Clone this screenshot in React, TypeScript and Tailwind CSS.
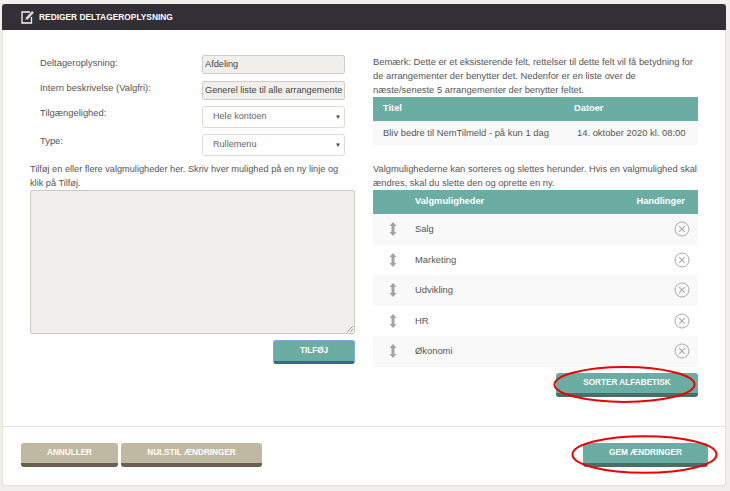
import React from "react";

const font = { fontFamily: '"Liberation Sans", Arial, sans-serif' };

function Btn({ children, w, kind }: { children: React.ReactNode; w: string; kind: "teal" | "tan" | "blue" }) {
  const cls =
    kind === "teal"
      ? "bg-[#6bada3] border-b-[4px] border-[#47706b]"
      : kind === "blue"
        ? "bg-[#6bada3] border border-[#7fa8dc] border-b-[3px] border-b-[#2f6d8c]"
        : "bg-[#bfb9a3] border-b-[4px] border-[#675f50]";
  return (
    <div className={`${w} ${cls} h-[24px] rounded-[3px] flex items-center justify-center pt-[1px] text-[8.2px] font-bold text-white`}>
      {children}
    </div>
  );
}

function Field({ label, value, top, labelPad }: { label: string; value: string; top: string; labelPad: string }) {
  return (
    <div className={`flex items-start ${top}`}>
      <div className={`w-[162px] ${labelPad} text-[9.4px] leading-[14px] text-[#555]`}>{label}</div>
      <div className="w-[143px] h-[19px] bg-[#f0efeb] border border-[#cfcdc6] rounded-[2px] px-[2px] flex items-center text-[9.2px] text-[#444] whitespace-nowrap">
        {value}
      </div>
    </div>
  );
}

function SelectRow({ label, value, top }: { label: string; value: string; top: string }) {
  return (
    <div className={`flex items-start ${top}`}>
      <div className="w-[162px] text-[9.4px] leading-[14px] text-[#555]">{label}</div>
      <div className="w-[143px] h-[22px] bg-white border border-[#dcdbd6] rounded-[3px] pl-[10px] pr-[3px] flex items-center justify-between text-[9.1px] text-[#666]">
        <span>{value}</span>
        <span className="text-[6px] text-[#444]">▼</span>
      </div>
    </div>
  );
}

function Grip() {
  return (
    <svg width="8" height="14" viewBox="0 0 8 14" fill="#a3a3a0">
      <path d="M4 0 L7.5 4 H5.5 V10 H7.5 L4 14 L0.5 10 H2.5 V4 H0.5 Z" />
    </svg>
  );
}

function Remove() {
  return (
    <svg width="16" height="16" viewBox="0 0 16 16" fill="none" stroke="#a9a9a6" strokeWidth="1">
      <circle cx="8" cy="8" r="7" />
      <path d="M5.2 5.2 L10.8 10.8 M10.8 5.2 L5.2 10.8" strokeWidth="1.1" />
    </svg>
  );
}

function Row({ name, shade }: { name: string; shade: boolean }) {
  return (
    <div className={`h-[30.5px] flex items-center text-[9.4px] text-[#555] ${shade ? "bg-[#f9f9f9]" : "bg-white"}`}>
      <div className="w-[42px] pr-[3px] flex justify-center">
        <Grip />
      </div>
      <div className="flex-1">{name}</div>
      <div className="pr-[8px] flex">
        <Remove />
      </div>
    </div>
  );
}

function EditIcon() {
  return (
    <svg width="14" height="14" viewBox="0 0 14 14" fill="none">
      <path d="M9 2 H1 V13 H10.5 V7" stroke="#f4f4f4" strokeWidth="1.3" />
      <path d="M4.5 9.8 L5 7.5 L11 1 L13 2.6 L7 9.2 Z" fill="#d8d8d8" />
    </svg>
  );
}

function Ellipse({ className }: { className: string }) {
  return (
    <svg className={`absolute pointer-events-none ${className}`} viewBox="0 0 100 100" preserveAspectRatio="none" fill="none">
      <ellipse cx="50" cy="50" rx="49" ry="47" stroke="#ee0000" strokeWidth="2" vectorEffect="non-scaling-stroke" />
    </svg>
  );
}

export default function App() {
  const rows = ["Salg", "Marketing", "Udvikling", "HR", "Økonomi"];
  return (
    <div style={font} className="relative w-[730px] h-[491px] bg-[#f0efeb] pt-[4px] pl-[2px] overflow-hidden">
      <div className="w-[724px] h-[482px] bg-white border-l border-r border-b border-[#e2e1da] rounded-b-[3px] flex flex-col">
        <div className="h-[26px] bg-[#323036] rounded-t-[3px] flex items-center pl-[19px] gap-[4px] -mx-[1px]">
          <EditIcon />
          <span className="text-[8.4px] font-bold text-white">REDIGER DELTAGEROPLYSNING</span>
        </div>

        <div className="h-[397px] flex border-b border-[#e2e1da]">
          <div className="w-[370px] pl-[27px] pt-[25px]">
            <div className="pl-[10px]">
              <Field label="Deltageroplysning:" value="Afdeling" top="" labelPad="pt-[1px]" />
              <Field label="Intern beskrivelse (Valgfri):" value="Generel liste til alle arrangemente" top="mt-[7px]" labelPad="pt-0" />
              <SelectRow label="Tilgængelighed:" value="Hele kontoen" top="mt-[6px]" />
              <SelectRow label="Type:" value="Rullemenu" top="mt-[6px]" />
            </div>
            <p className="w-[325px] mt-[6px] text-[9.2px] leading-[14px] text-[#555] whitespace-nowrap">
              Tilføj en eller flere valgmuligheder her. Skriv hver mulighed på en ny linje og
              <br />
              klik på Tilføj.
            </p>
            <div className="relative w-[325px] h-[144px] bg-[#f0efeb] border border-[#c9c8c2] rounded-[2px]">
              <svg className="absolute right-[1px] bottom-[1px]" width="7" height="7" viewBox="0 0 7 7" stroke="#888" strokeWidth="0.8">
                <path d="M1 7 L7 1 M4 7 L7 4" />
              </svg>
            </div>
            <div className="w-[325px] flex justify-end mt-[6px]">
              <Btn w="w-[82px]" kind="blue">TILFØJ</Btn>
            </div>
          </div>

          <div className="w-[325px] pt-[25px]">
            <p className="text-[9.35px] leading-[14px] text-[#555]">
              Bemærk: Dette er et eksisterende felt, rettelser til dette felt vil få betydning for de arrangementer der benytter det. Nedenfor er en liste over de næste/seneste 5 arrangementer der benytter feltet.
            </p>
            <div className="h-[24px] bg-[#6bada3] flex items-center text-[9.3px] font-bold text-white">
              <div className="w-[201px] pl-[10px]">Titel</div>
              <div>Datoer</div>
            </div>
            <div className="h-[24px] bg-[#f9f9f9] flex items-center text-[9.4px] text-[#555]">
              <div className="w-[204px] pl-[10px]">Bliv bedre til NemTilmeld - på kun 1 dag</div>
              <div>14. oktober 2020 kl. 08:00</div>
            </div>
            <p className="mt-[17px] text-[9.35px] leading-[14px] text-[#555] whitespace-nowrap">
              Valgmulighederne kan sorteres og slettes herunder. Hvis en valgmulighed skal
              <br />
              ændres, skal du slette den og oprette en ny.
            </p>
            <div className="h-[24px] bg-[#6bada3] flex items-center justify-between text-[9.3px] font-bold text-white">
              <div className="pl-[42px]">Valgmuligheder</div>
              <div className="pr-[13px]">Handlinger</div>
            </div>
            {rows.map((r, i) => (
              <Row key={r} name={r} shade={i % 2 === 0} />
            ))}
            <div className="flex justify-end mt-[6px]">
              <Btn w="w-[142px]" kind="teal">SORTER ALFABETISK</Btn>
            </div>
          </div>
        </div>

        <div className="flex items-start pt-[16px] pl-[18px] pr-[17px] gap-[3px]">
          <Btn w="w-[97px]" kind="tan">ANNULLER</Btn>
          <Btn w="w-[141px]" kind="tan">NULSTIL ÆNDRINGER</Btn>
          <div className="ml-auto">
            <Btn w="w-[125px]" kind="teal">GEM ÆNDRINGER</Btn>
          </div>
        </div>
      </div>

      <Ellipse className="left-[553px] top-[366px] w-[143px] h-[37px]" />
      <Ellipse className="left-[571px] top-[435px] w-[147px] h-[39px]" />
    </div>
  );
}
